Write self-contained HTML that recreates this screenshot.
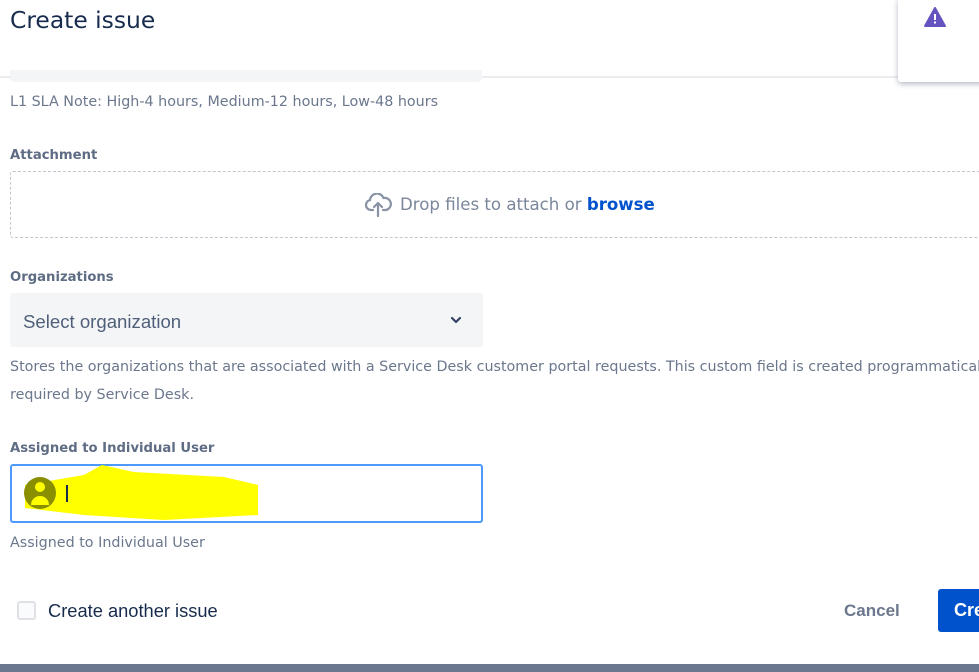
<!DOCTYPE html>
<html><head><style>
*{margin:0;padding:0;box-sizing:border-box}
body{width:979px;height:672px;overflow:hidden;background:#fff;font-family:"Liberation Sans",sans-serif;position:relative}
.a{position:absolute;white-space:nowrap}
.lbl{font-size:13.2px;font-weight:bold;color:#5e6c84;font-family:"DejaVu Sans",sans-serif}
.help{font-size:14.3px;color:#6b778c;font-family:"DejaVu Sans",sans-serif}
</style></head><body>
<div class="a" style="left:10px;top:6px;font-size:23.4px;color:#172b4d;font-family:'DejaVu Sans',sans-serif">Create issue</div>
<div class="a" style="left:0;top:76px;width:979px;height:2px;background:#ebecf0"></div>
<div class="a" style="left:10px;top:70px;width:472px;height:12px;background:#f4f5f7;border-radius:0 0 4px 4px"></div>
<div class="a" style="left:898px;top:-2px;width:90px;height:84px;background:#fff;box-shadow:0 2px 6px rgba(9,30,66,.3);border-radius:3px"></div>
<svg class="a" style="left:924px;top:7px" width="22" height="20" viewBox="0 0 22 20"><path d="M11 1L21 19H1Z" fill="#6554c0" stroke="#6554c0" stroke-linejoin="round" stroke-width="2"/><rect x="10" y="7" width="2" height="6" fill="#fff"/><rect x="10" y="14.5" width="2" height="2" fill="#fff"/></svg>
<div class="a help" style="left:10px;top:94px">L1 SLA Note: High-4 hours, Medium-12 hours, Low-48 hours</div>
<div class="a lbl" style="left:10px;top:148px">Attachment</div>
<div class="a" style="left:10px;top:171px;width:985px;height:67px;border:1px dashed #c1c7d0;border-radius:3px"></div>
<svg class="a" style="left:364px;top:193px" width="28" height="24" viewBox="0 0 28 24"><path d="M9 17H7a5 5 0 0 1-1-9.9A7 7 0 0 1 19.5 5 5 5 0 0 1 22 17h-3" fill="none" stroke="#8993a4" stroke-width="2.2" stroke-linecap="round"/><path d="M14 23V11M10 14l4-4 4 4" fill="none" stroke="#8993a4" stroke-width="2.2" stroke-linecap="round" stroke-linejoin="round"/></svg>
<div class="a" style="left:400px;top:195px;font-size:16.6px;color:#7a869a;font-family:'DejaVu Sans',sans-serif">Drop files to attach or <b style="color:#0052cc">browse</b></div>
<div class="a lbl" style="left:10px;top:270px">Organizations</div>
<div class="a" style="left:10px;top:293px;width:473px;height:54px;background:#f4f5f7;border-radius:3px"></div>
<div class="a" style="left:23px;top:311px;font-size:18.6px;color:#505f79">Select organization</div>
<svg class="a" style="left:449px;top:314px" width="14" height="12" viewBox="0 0 14 12"><path d="M3 4l4 4 4-4" fill="none" stroke="#344563" stroke-width="2.2" stroke-linecap="round" stroke-linejoin="round"/></svg>
<div class="a help" style="left:10px;top:359px">Stores the organizations that are associated with a Service Desk customer portal requests. This custom field is created programmatically a</div>
<div class="a help" style="left:10px;top:387px">required by Service Desk.</div>
<div class="a lbl" style="left:10px;top:441px">Assigned to Individual User</div>
<div class="a" style="left:10px;top:464px;width:473px;height:59px;border:2px solid #4c9aff;border-radius:3px;background:#fff"></div>
<svg class="a" style="left:24px;top:465px" width="240" height="56" viewBox="0 0 240 56"><path d="M1 20 L60 10 L78 0 L110 7 L200 12 L234 20 L234 50 L140 55 L60 50 L1 43Z" fill="#ffff00"/><circle cx="16" cy="28" r="16" fill="#8a8f00"/><circle cx="16" cy="22" r="5" fill="#ffff00"/><path d="M7 40a9 9 0 0 1 18 0Z" fill="#ffff00"/><rect x="42" y="20" width="2" height="17" fill="#172b4d"/></svg>
<div class="a help" style="left:10px;top:535px">Assigned to Individual User</div>
<div class="a" style="left:17px;top:601px;width:19px;height:19px;border:2px solid #dfe1e6;border-radius:3px;background:#fafbfc"></div>
<div class="a" style="left:48px;top:600px;font-size:18.3px;color:#172b4d">Create another issue</div>
<div class="a" style="left:844px;top:601px;font-size:17px;font-weight:bold;color:#6b778c">Cancel</div>
<div class="a" style="left:938px;top:589px;width:60px;height:43px;background:#0052cc;border-radius:3px"></div>
<div class="a" style="left:954px;top:600px;font-size:18px;font-weight:bold;color:#fff">Cre</div>
<div class="a" style="left:0;top:664px;width:979px;height:8px;background:#6b778c"></div>
</body></html>
